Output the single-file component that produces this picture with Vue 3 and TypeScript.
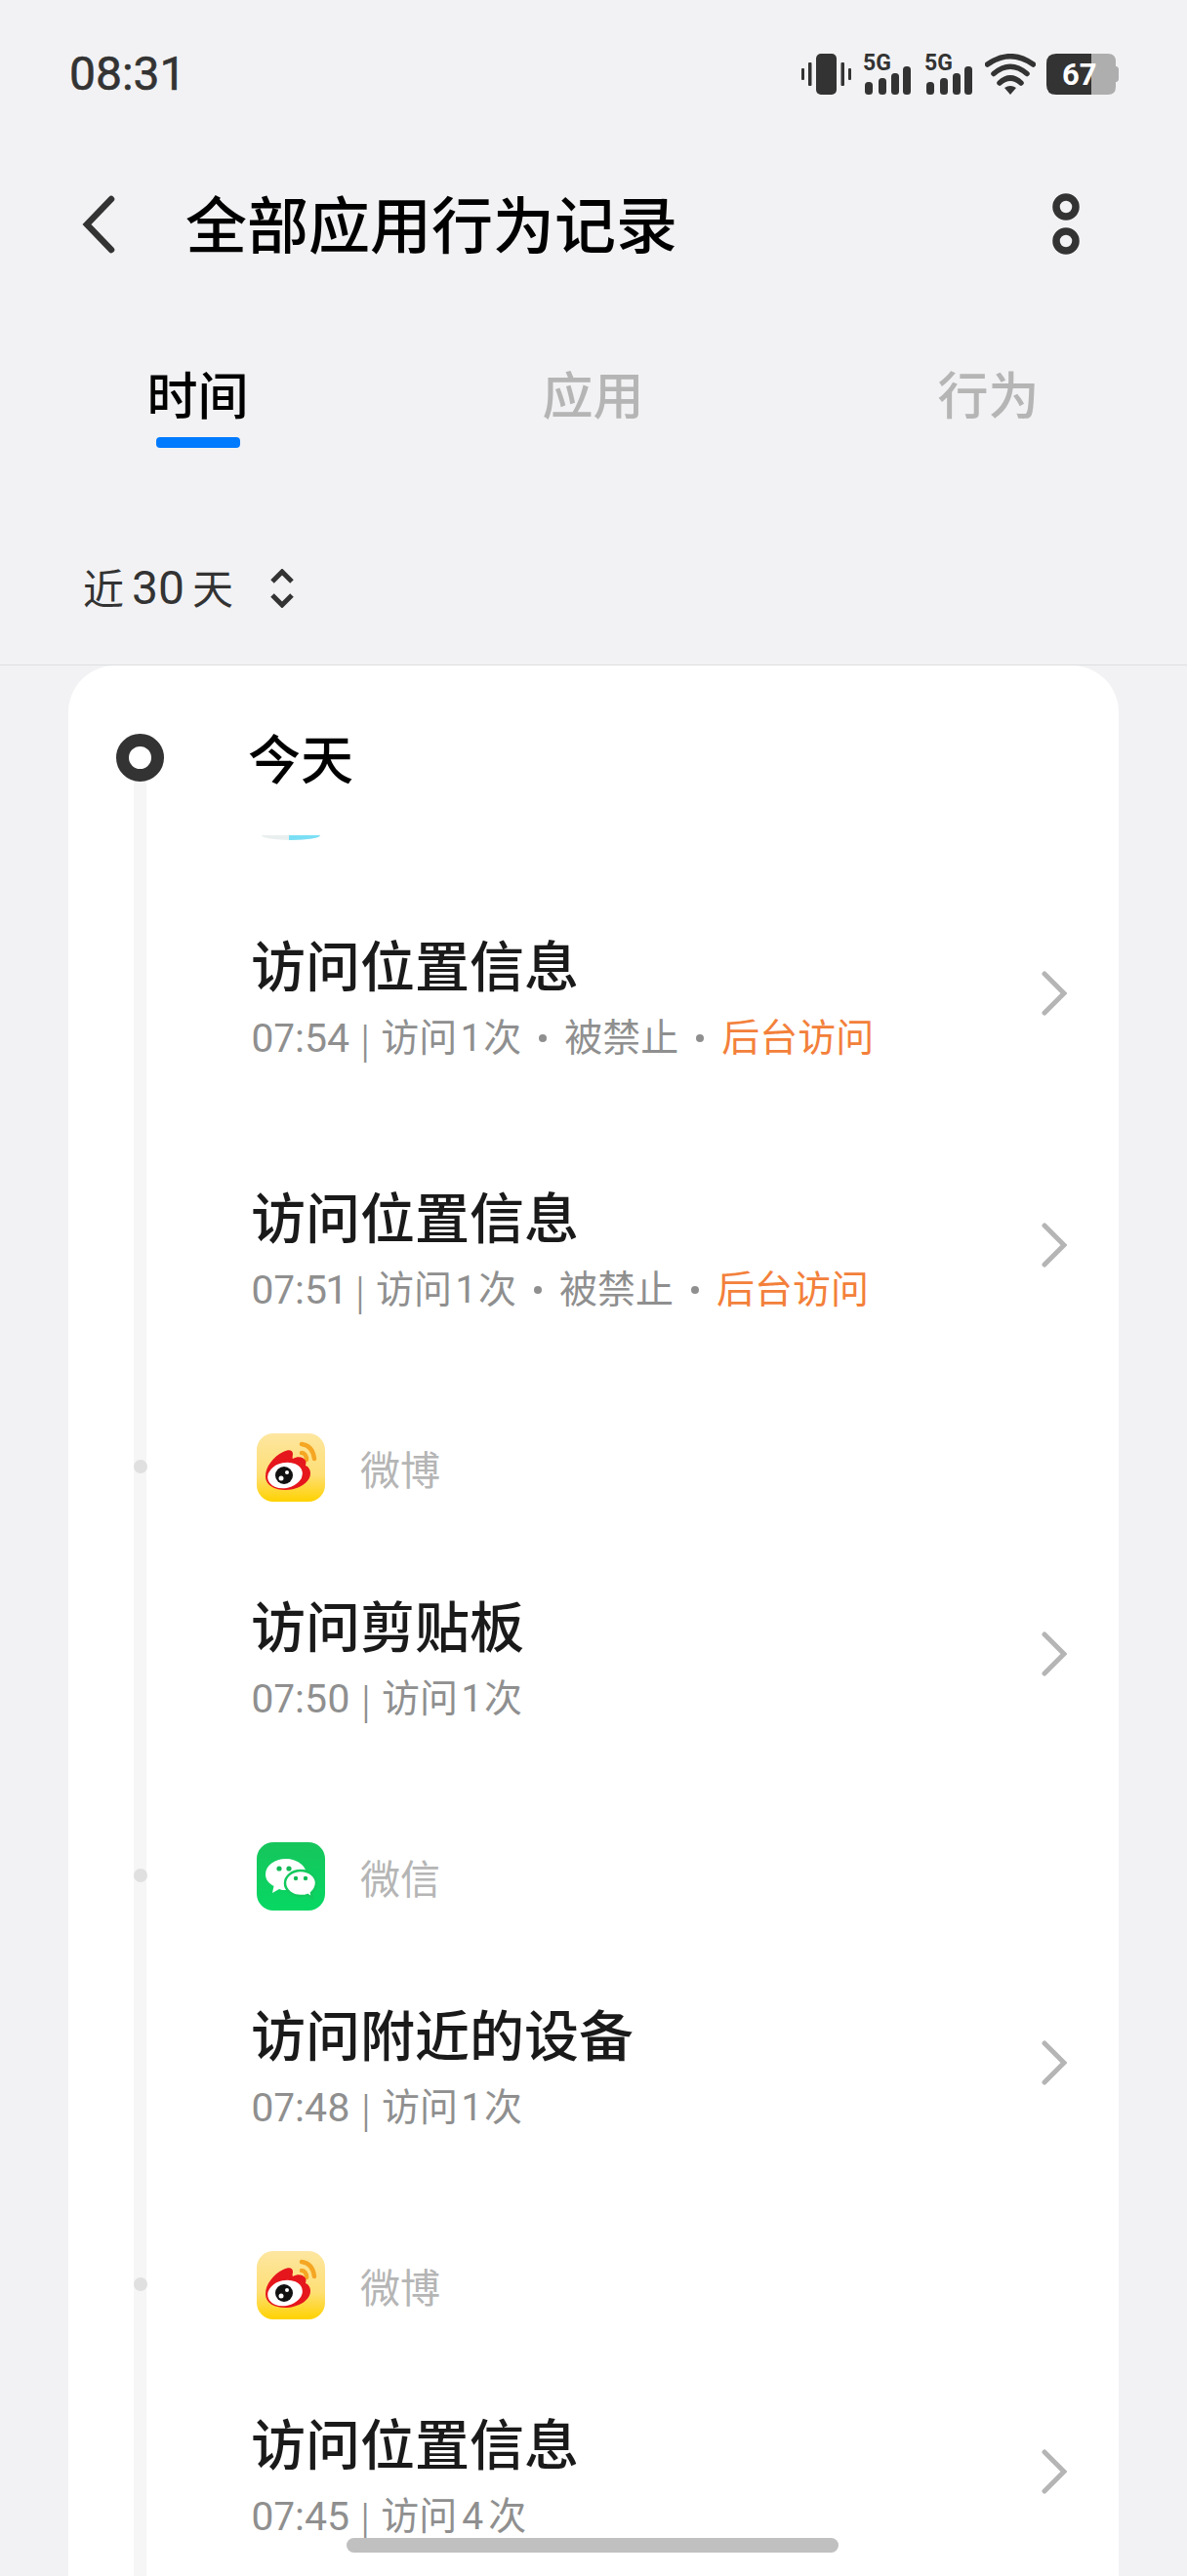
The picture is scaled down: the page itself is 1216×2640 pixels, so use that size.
<script setup lang="ts">
interface Item { kind: 'item'; title: string; time: string; count: number; blocked?: boolean }
interface AppHead { kind: 'app'; name: string; icon: 'weibo' | 'wechat' }
type Row = Item | AppHead
const rows: Row[] = [
  { kind: 'item', title: '访问位置信息', time: '07:54', count: 1, blocked: true },
  { kind: 'item', title: '访问位置信息', time: '07:51', count: 1, blocked: true },
  { kind: 'app', name: '微博', icon: 'weibo' },
  { kind: 'item', title: '访问剪贴板', time: '07:50', count: 1 },
  { kind: 'app', name: '微信', icon: 'wechat' },
  { kind: 'item', title: '访问附近的设备', time: '07:48', count: 1 },
  { kind: 'app', name: '微博', icon: 'weibo' },
  { kind: 'item', title: '访问位置信息', time: '07:45', count: 4 },
]
</script>

<template>
  <div class="phone">
    <div class="status">
      <span class="clock">08:31</span>
      <div class="status-icons">
        <svg width="51" height="42" viewBox="0 0 51 42">
          <rect x="0" y="15" width="3" height="12" rx="1" fill="#333" />
          <rect x="7" y="9" width="3.5" height="24" rx="1" fill="#333" />
          <rect x="15" y="0" width="21" height="42" rx="5" fill="#333" />
          <rect x="40.5" y="9" width="3.5" height="24" rx="1" fill="#333" />
          <rect x="48" y="15" width="3" height="12" rx="1" fill="#333" />
        </svg>
        <svg v-for="n in 2" :key="n" class="sig" width="50" height="48" viewBox="0 -3 50 48">
          <text x="0" y="16.5" class="fiveg">5G</text>
          <rect x="2" y="29" width="8" height="13" rx="3.5" fill="#333" />
          <rect x="16" y="25" width="8" height="17" rx="3.5" fill="#333" />
          <rect x="29" y="20" width="8" height="22" rx="3.5" fill="#333" />
          <rect x="41" y="13" width="8" height="29" rx="3.5" fill="#333" />
        </svg>
        <svg width="52" height="42" viewBox="0 0 52 42">
          <path d="M2.5 11 Q26 -5.6 49.5 11" fill="none" stroke="#333" stroke-width="5.5" stroke-linecap="round" />
          <path d="M9 20.5 Q26 6 43 20.5" fill="none" stroke="#333" stroke-width="5.5" stroke-linecap="round" />
          <path d="M15 30 Q26 20 37 30" fill="none" stroke="#333" stroke-width="5.5" stroke-linecap="round" />
          <path d="M20 35 Q26 31 32 35 L26 42 Z" fill="#333" />
        </svg>
        <svg class="battery" width="74" height="42" viewBox="0 0 74 42">
          <path d="M46 0 H63 Q71 0 71 8 V13 H72 Q74 14 74 16 V26 Q74 28 72 29 H71 V34 Q71 42 63 42 H46 Z" fill="#aeaeae" />
          <path d="M46 0 H10 Q0 0 0 10 V32 Q0 42 10 42 H46 Z" fill="#333" />
          <text x="16" y="32" class="batt">67</text>
        </svg>
      </div>
    </div>

    <header class="topbar">
      <svg class="back" width="34" height="60" viewBox="0 0 34 60">
        <path d="M30 4 L5 30 L30 56" fill="none" stroke="#333" stroke-width="6.5" stroke-linecap="round" stroke-linejoin="miter" />
      </svg>
      <h1 class="title">全部应用行为记录</h1>
      <svg class="more" width="28" height="64" viewBox="0 0 28 64">
        <circle cx="14" cy="14" r="10" fill="none" stroke="#333" stroke-width="7.5" />
        <circle cx="14" cy="49" r="10" fill="none" stroke="#333" stroke-width="7.5" />
      </svg>
    </header>

    <nav class="tabs">
      <div class="tab active">时间<i class="ink"></i></div>
      <div class="tab">应用</div>
      <div class="tab">行为</div>
    </nav>

    <div class="filter">
      <span class="range">近<b>30</b>天</span>
      <svg width="24" height="40" viewBox="0 0 24 40">
        <path d="M2 13 L12 3 L22 13" fill="none" stroke="#333" stroke-width="5" />
        <path d="M2 27 L12 37 L22 27" fill="none" stroke="#333" stroke-width="5" />
      </svg>
    </div>

    <main class="card">
      <i class="rail"></i>
      <div class="today">
        <i class="ring"></i>
        <span>今天</span>
      </div>
      <div class="peek"><i></i></div>

      <template v-for="(r, i) in rows" :key="i">
        <div v-if="r.kind === 'app'" class="app">
          <i class="dot"></i>
          <svg v-if="r.icon === 'weibo'" width="70" height="70" viewBox="0 0 70 70">
            <defs>
              <linearGradient id="wb" x1="0" y1="0" x2="0" y2="1">
                <stop offset="0" stop-color="#fde6a0" />
                <stop offset="0.6" stop-color="#fedf76" />
                <stop offset="1" stop-color="#ffd200" />
              </linearGradient>
            </defs>
            <rect width="70" height="70" rx="17" fill="url(#wb)" />
            <path d="M46 11 C53 12 58 17 59 26" fill="none" stroke="#f5a623" stroke-width="4.5" stroke-linecap="round" />
            <path d="M46 20 C49 20 51 23 51 27" fill="none" stroke="#f5a623" stroke-width="4.5" stroke-linecap="round" />
            <path d="M9 44 C9 34 17 24 27 19 C33 16 37 17 37 21 C37 23 36 25 37 26 C42 23 48 24 50 28 C51 30 50 32 50 33 C53 34 55 37 55 41 C55 50 43 58 29 58 C18 58 9 53 9 44 Z" fill="#e6161d" />
            <ellipse cx="29" cy="43" rx="18" ry="13" fill="#fff" transform="rotate(-12 29 43)" />
            <circle cx="28" cy="43" r="9" fill="#111" />
            <circle cx="25" cy="46" r="2.5" fill="#fff" />
            <circle cx="31" cy="40" r="2" fill="#fff" />
          </svg>
          <svg v-else width="70" height="70" viewBox="0 0 70 70">
            <defs>
              <linearGradient id="wx" x1="0" y1="0" x2="0" y2="1">
                <stop offset="0" stop-color="#16c55c" />
                <stop offset="1" stop-color="#07d863" />
              </linearGradient>
            </defs>
            <rect width="70" height="70" rx="17" fill="url(#wx)" />
            <path d="M30 17 C41 17 51 24 51 33 C51 43 41 49 30 49 C27 49 25 49 23 48 L16 52 L17.5 45 C12 42 9 38 9 33 C9 24 18 17 30 17 Z" fill="#fff" />
            <path d="M45 29 C54 29 61 35 61 42 C61 46 59 49 56 52 L57 57 L52 54 C50 55 47 55 45 55 C36 55 29 49 29 42 C29 35 36 29 45 29 Z" fill="#fff" stroke="#12c95d" stroke-width="2.5" />
            <circle cx="23" cy="27" r="2.6" fill="#12b955" />
            <circle cx="33" cy="27" r="2.6" fill="#12b955" />
            <circle cx="40" cy="37" r="2.2" fill="#12b955" />
            <circle cx="50" cy="37" r="2.2" fill="#12b955" />
          </svg>
          <span class="app-name">{{ r.name }}</span>
        </div>
        <div v-else class="item">
          <div class="item-text">
            <div class="item-title">{{ r.title }}</div>
            <div class="item-sub">
              <span class="tm">{{ r.time }}</span><span class="sep">|</span><span>访问<span class="num">{{ r.count }}</span>次</span>
              <template v-if="r.blocked">
                <i class="bullet"></i><span>被禁止</span><i class="bullet"></i><span class="warn">后台访问</span>
              </template>
            </div>
          </div>
          <svg class="go" width="26" height="46" viewBox="0 0 26 46">
            <path d="M3 3 L23 23 L3 43" fill="none" stroke="#b5b5b5" stroke-width="5" stroke-linecap="round" />
          </svg>
        </div>
      </template>
    </main>

    <i class="home"></i>
  </div>
</template>

<style scoped>
.phone {
  position: relative;
  width: 1216px;
  height: 2640px;
  overflow: hidden;
  background: #f2f2f4;
  font-family: Roboto, "Noto Sans CJK SC", sans-serif;
  color: #000;
}
i { display: block; }
.status {
  height: 152px;
  padding: 0 70px 0 71px;
  box-sizing: border-box;
  display: flex;
  align-items: center;
  justify-content: space-between;
}
.clock { font-size: 48px; font-weight: 400; color: #333; line-height: 1; -webkit-text-stroke: 0.6px #333; }
.status-icons { display: flex; align-items: center; }
.status-icons > svg:nth-child(1) { margin-right: 12px; }
.status-icons > svg:nth-child(2) { margin-right: 13px; }
.status-icons > svg:nth-child(3) { margin-right: 12px; }
.status-icons > svg:nth-child(4) { margin-right: 11px; }
.fiveg { font: 700 23px Roboto, sans-serif; fill: #333; }
.batt { font: 700 31px Roboto, sans-serif; fill: #fff; }
.topbar {
  height: 156px;
  display: flex;
  align-items: center;
  padding: 0 110px 0 84px;
}
.title {
  flex: 1;
  margin: 0 0 6px 72px;
  font-size: 63px;
  line-height: 1.2;
  font-weight: 500;
  font-family: "Noto Sans CJK SC", sans-serif;
  color: #000;
}
.tabs {
  display: grid;
  grid-template-columns: repeat(3, 405px);
  height: 145px;
  padding-top: 65px;
  box-sizing: border-box;
}
.tab {
  position: relative;
  text-align: center;
  font-size: 52px;
  line-height: 60px;
  font-weight: 500;
  color: #b5b5b5;
  font-family: "Noto Sans CJK SC", sans-serif;
}
.tab.active { color: #000; }
.ink {
  width: 86px;
  height: 11px;
  margin: 15px auto 0;
  border-radius: 4px;
  background: #007aff;
}
.filter {
  height: 229px;
  box-sizing: border-box;
  display: flex;
  align-items: center;
  padding: 71px 0 0 85px;
  gap: 38px;
  border-bottom: 1px solid #dedfe1;
}
.range {
  font-size: 42px;
  line-height: 1;
  color: #333;
  font-family: "Noto Sans CJK SC", sans-serif;
}
.range b { font-family: Roboto, sans-serif; font-weight: 400; margin: 0 8px; font-size: 48px; }
.card {
  position: relative;
  margin: 0 70px;
  height: 2400px;
  padding-left: 188px;
  background: #fff;
  border-radius: 48px 48px 0 0;
}
.rail {
  position: absolute;
  left: 67px;
  top: 118px;
  bottom: 0;
  width: 13px;
  background: #f6f6f6;
}
.today {
  position: relative;
  height: 174px;
  padding-top: 64px;
  box-sizing: border-box;
  font-size: 54px;
  line-height: 60px;
  font-weight: 500;
  font-family: "Noto Sans CJK SC", sans-serif;
  color: #000;
  margin-left: -4px;
}
.ring {
  position: absolute;
  left: -135px;
  top: 70px;
  width: 49px;
  height: 49px;
  box-sizing: border-box;
  border: 13.5px solid #333;
  border-radius: 50%;
  background: #fff;
}
.peek {
  height: 5px;
  width: 60px;
  margin: 0 0 36px 10px;
  overflow: hidden;
  border-radius: 0 0 50% 50% / 0 0 100% 100%;
  background: #e9efee;
}
.peek i { margin-left: 28px; height: 5px; background: #7adff5; }
.item {
  height: 258px;
  display: flex;
  align-items: center;
  justify-content: space-between;
  padding-right: 53px;
}
.item-text { margin: 0 0 11px -1px; }
.item-title {
  font-size: 56px;
  line-height: 66px;
  font-weight: 500;
  color: #1a1a1a;
  font-family: "Noto Sans CJK SC", sans-serif;
  margin-bottom: 21px;
}
.item-sub {
  display: flex;
  align-items: center;
  font-size: 39px;
  line-height: 46px;
  color: #8f8f8f;
  white-space: nowrap;
}
.tm { font-size: 41px; font-feature-settings: "pnum"; }
.sep { margin: 0 11px; font-size: 46px; font-weight: 300; line-height: 46px; position: relative; top: 3px; }
.num { margin: 0 5px; font-feature-settings: "pnum"; }
.bullet {
  width: 8px;
  height: 8px;
  margin: 0 18px;
  border-radius: 50%;
  background: #8f8f8f;
}
.warn { color: #f3803a; }
.go { margin-bottom: 16px; }
.app {
  position: relative;
  height: 141px;
  margin-top: 20px;
  display: flex;
  align-items: center;
  gap: 36px;
  margin-left: 5px;
}
.dot {
  position: absolute;
  left: -126px;
  top: 63px;
  width: 14px;
  height: 14px;
  border-radius: 50%;
  background: #e0e0e0;
}
.app-name { font-size: 41px; color: #b5b5b5; font-family: "Noto Sans CJK SC", sans-serif; }
.home {
  position: absolute;
  left: 355px;
  top: 2601px;
  width: 504px;
  height: 15px;
  border-radius: 8px;
  background: #c0c0c0;
}
</style>
